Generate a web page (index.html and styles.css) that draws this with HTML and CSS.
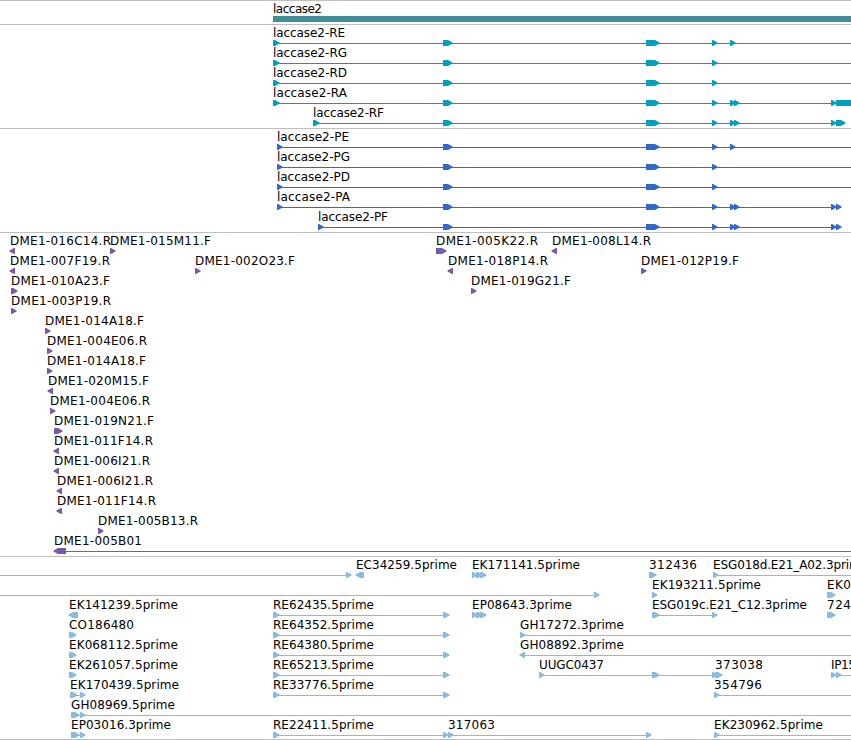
FILE: index.html
```html
<!DOCTYPE html>
<html lang="en">
<head>
    <meta charset="UTF-8">
    <meta name="viewport" content="width=device-width, initial-scale=1.0">
    <title>laccase2 - genome view</title>
    <link rel="stylesheet" href="styles.css">
</head>
<body>
    <main class="browser">
        <section class="track gene"></section>
        <section class="track transcript"></section>
        <section class="track protein"></section>
        <section class="track bac"></section>
        <section class="track est"></section>
    </main>
    <script src="tracks.js"></script>
</body>
</html>
```
FILE: styles.css
```css
* {
    margin: 0;
    padding: 0;
    box-sizing: border-box;
}

body {
    background-color: #fff;
    overflow: hidden;
}

.browser {
    width: 851px;
    border-bottom: 1px solid #bfbfbf;
}

.track {
    border-top: 1px solid #bfbfbf;
    padding: 2px 0 1px;
}

.est {
    padding-bottom: 0;
}

.row {
    display: block;
    width: 100%;
    height: 20px;
    overflow: visible;
}

.label {
    font: 12px "DejaVu Sans", sans-serif;
    fill: #000;
}

.intron {
    shape-rendering: crispEdges;
}

.gene {
    fill: #3f8e96;
}

.transcript {
    fill: #009fbf;
}

.protein {
    fill: #3068cc;
}

.bac {
    fill: #785aac;
}

.est {
    fill: #88bbdf;
}
```
FILE: tracks.js
```js
const END = 851;

// feature: [label, label start, label end, direction, exons, line end]
// direction: 1 forward, -1 reverse, 0 plain block
const first = [443, 452], second = [646, 659], third = [712, 717];
const re = name => [name, 273, 374, 1, [[273, 279], [443, 449]]];
const bac = (name, x, to, dir, w = 5) => ['DME1-' + name, x, to, dir, [[x, x + w]]];

const tracks = {
    gene: [
        [['laccase2', 273, 322, 0, [[273, END]]]]
    ],
    transcript: [
        [['laccase2-RE', 273, 345, 1, [[273, 279], first, second, third, [730, 735]], END]],
        [['laccase2-RG', 273, 347, 1, [[273, 279], first, second, third], END]],
        [['laccase2-RD', 273, 347, 1, [[273, 279], first, second, third], END]],
        [['laccase2-RA', 273, 347, 1, [[273, 279], first, second, third, [730, 735], [734, 739], [831, 836], [836, 860]], END]],
        [['laccase2-RF', 313, 384, 1, [[313, 319], first, second, third, [730, 735], [734, 739], [831, 836], [836, 845]]]]
    ],
    protein: [
        [['laccase2-PE', 277, 349, 1, [[277, 282], first, second, third, [730, 735]], END]],
        [['laccase2-PG', 277, 350, 1, [[277, 282], first, second, third], END]],
        [['laccase2-PD', 277, 350, 1, [[277, 282], first, second, third], END]],
        [['laccase2-PA', 277, 350, 1, [[277, 282], first, second, third, [730, 735], [734, 739], [831, 836], [836, 841]]]],
        [['laccase2-PF', 318, 388, 1, [[318, 323], first, second, third, [730, 735], [734, 739], [831, 836], [836, 841]]]]
    ],
    bac: [
        [bac('016C14.R', 10, 111, -1), bac('015M11.F', 110, 211, 1), bac('005K22.R', 436, 538, 1, 10), bac('008L14.R', 552, 651, -1)],
        [bac('007F19.R', 10, 110, -1), bac('002O23.F', 195, 295, 1), bac('018P14.R', 448, 548, -1), bac('012P19.F', 641, 739, 1)],
        [bac('010A23.F', 11, 110, 1, 6), bac('019G21.F', 471, 571, 1)],
        [bac('003P19.R', 11, 111, 1)],
        [bac('014A18.F', 45, 144, 1)],
        [bac('004E06.R', 47, 147, 1)],
        [bac('014A18.F', 47, 146, 1)],
        [bac('020M15.F', 48, 149, -1)],
        [bac('004E06.R', 50, 150, 1)],
        [bac('019N21.F', 54, 154, 1, 8)],
        [bac('011F14.R', 54, 153, -1)],
        [bac('006I21.R', 54, 150, -1)],
        [bac('006I21.R', 57, 153, -1)],
        [bac('011F14.R', 57, 156, -1)],
        [bac('005B13.R', 98, 198, 1)],
        [['DME1-005B01', 54, 142, -1, [[54, 66]], END]]
    ],
    est: [
        [
            ['', 0, 0, 1, [[-10, -5], [346, 351]]],
            ['EC34259.5prime', 356, 457, -1, [[356, 364]]],
            ['EK171141.5prime', 472, 580, 1, [[472, 477], [476, 482], [480, 486]]],
            ['312436', 649, 697, 1, [[649, 656]]],
            ['ESG018d.E21_A02.3prime', 713, 868, 1, [[713, 718]], END]
        ],
        [
            ['', 0, 0, 1, [[-10, -5], [594, 599]]],
            ['EK193211.5prime', 652, 761, 1, [[652, 657]]],
            ['EK0', 827, 851, 1, [[827, 835]]]
        ],
        [
            ['EK141239.5prime', 69, 178, -1, [[69, 78]]],
            re('RE62435.5prime'),
            ['EP08643.3prime', 472, 572, 1, [[472, 477], [476, 482], [480, 486]]],
            ['ESG019c.E21_C12.3prime', 652, 807, 1, [[652, 659], third]],
            ['724', 827, 851, 1, [[827, 835]]]
        ],
        [
            ['CO186480', 69, 134, 1, [[69, 76]]],
            re('RE64352.5prime'),
            ['GH17272.3prime', 520, 624, 1, [[520, 525]], END]
        ],
        [
            ['EK068112.5prime', 69, 178, 1, [[69, 76]]],
            re('RE64380.5prime'),
            ['GH08892.3prime', 520, 624, -1, [[520, 525]], END]
        ],
        [
            ['EK261057.5prime', 69, 178, 1, [[69, 76]]],
            re('RE65213.5prime'),
            ['UUGC0437', 539, 604, 1, [[539, 544], [652, 659], third]],
            ['373038', 715, 763, 1, [[715, 722]]],
            ['IP15', 831, 856, 1, [[831, 836], [836, 841]], END]
        ],
        [
            ['EK170439.5prime', 70, 179, 1, [[70, 77], [80, 85]]],
            re('RE33776.5prime'),
            ['354796', 714, 762, 1, [[714, 719]], END]
        ],
        [
            ['GH08969.5prime', 71, 175, 1, [[71, 79], [80, 85]], END]
        ],
        [
            ['EP03016.3prime', 71, 171, 1, [[71, 79], [80, 85]]],
            ['RE22411.5prime', 273, 374, 1, [[273, 279], [443, 448]]],
            ['317063', 448, 495, 1, [[448, 453], [646, 651]]],
            ['EK230962.5prime', 714, 823, 1, [[714, 719]], END]
        ]
    ]
};

function exon([a, b], dir) {
    if (dir === 0) return `<path d="M${a} 13H${b}V19H${a}Z"/>`;
    const head = Math.min(b - a, 5) - 1;
    if (dir > 0) return `<path d="M${a} 13H${b - head}L${b + .5} 15.5V16.5L${b - head} 19H${a}Z"/>`;
    return `<path d="M${b} 13H${a + head}L${a - .5} 15.5V16.5L${a + head} 19H${b}Z"/>`;
}

function feature([name, x, to, dir, exons, end]) {
    const start = exons[0][0];
    const stop = end || exons[exons.length - 1][1];
    const line = dir ? `<rect class="intron" x="${start}" y="16" width="${stop - start}" height="1"/>` : '';
    const text = name ? `<text class="label" x="${x}" y="10" textLength="${to - x}">${name}</text>` : '';
    return line + exons.map(e => exon(e, dir)).join('') + text;
}

for (const name in tracks) {
    document.querySelector('.' + name).innerHTML = tracks[name]
        .map(row => `<svg class="row">${row.map(feature).join('')}</svg>`)
        .join('');
}
```
